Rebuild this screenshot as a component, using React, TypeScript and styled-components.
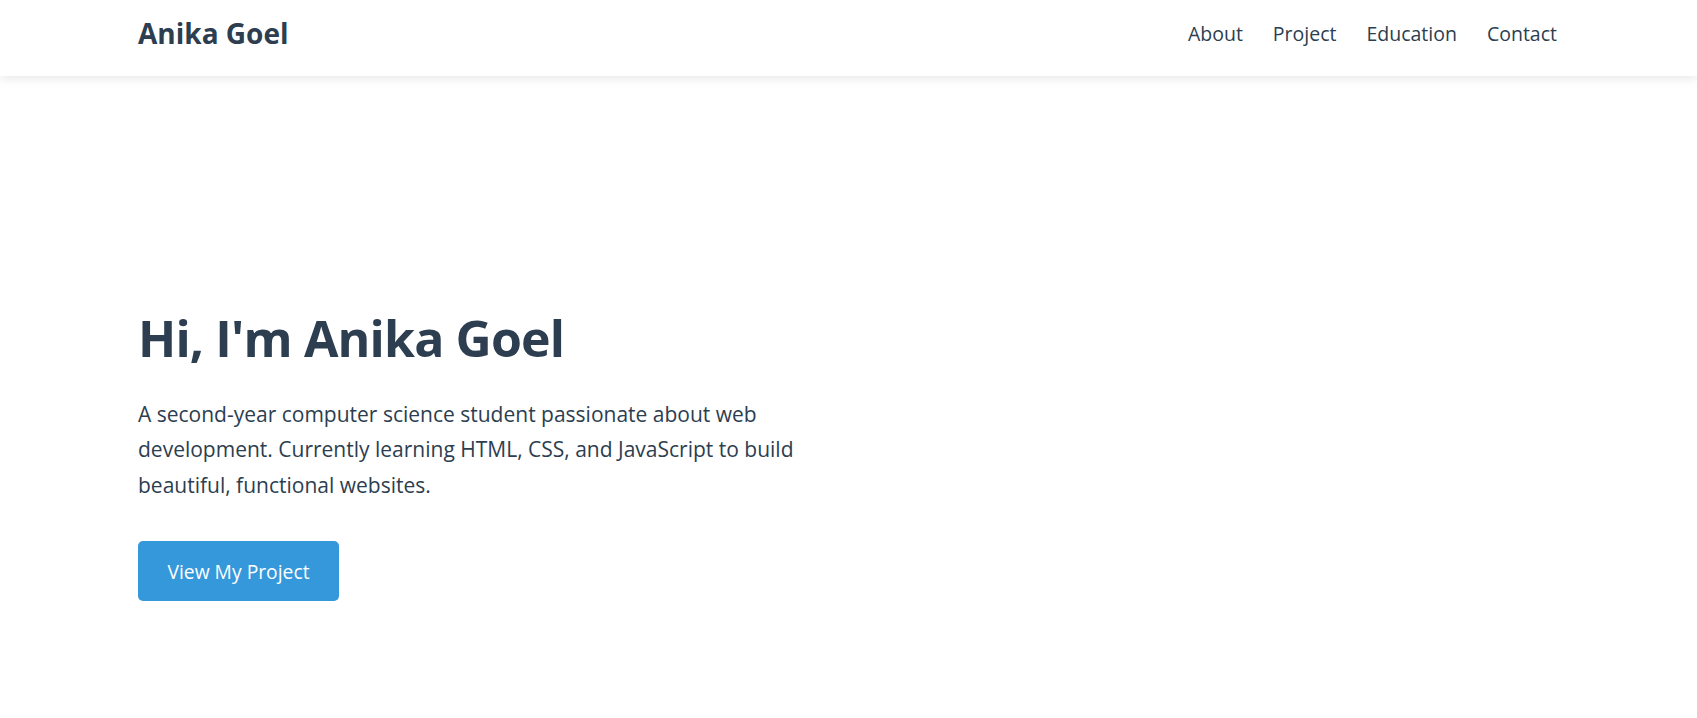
import styled, { createGlobalStyle } from "styled-components";

const GlobalStyle = createGlobalStyle`
  * {
    box-sizing: border-box;
    margin: 0;
    padding: 0;
  }
  body {
    font-family: "Segoe UI", "Open Sans", "Noto Sans", sans-serif;
    color: #2c3e50;
    background: #ffffff;
  }
`;

const navLinks = ["About", "Project", "Education", "Contact"];

const App = () => {
  return (
    <>
      <GlobalStyle />
      <Header>
        <Logo>Anika Goel</Logo>
        <Nav>
          {navLinks.map((link) => (
            <NavLink key={link} href={`#${link.toLowerCase()}`}>
              {link}
            </NavLink>
          ))}
        </Nav>
      </Header>
      <Hero>
        <Title>Hi, I'm Anika Goel</Title>
        <Intro>
          A second-year computer science student passionate about web
          development. Currently learning HTML, CSS, and JavaScript to build
          beautiful, functional websites.
        </Intro>
        <Button href="#project">View My Project</Button>
      </Hero>
    </>
  );
};

export default App;

const Header = styled.header`
  height: 76px;
  padding: 0 140px 10px 138px;
  display: flex;
  align-items: center;
  justify-content: space-between;
  background: #ffffff;
  box-shadow: 0 2px 10px rgba(0, 0, 0, 0.1);
  position: relative;
  z-index: 10;
`;

const Logo = styled.div`
  font-size: 28px;
  font-weight: 700;
  color: #2c3e50;
`;

const Nav = styled.nav`
  display: flex;
  align-items: center;
  gap: 30px;
`;

const NavLink = styled.a`
  font-size: 19.5px;
  font-weight: 500;
  color: #2c3e50;
  text-decoration: none;
`;

const Hero = styled.section`
  padding: 232px 138px 0;
  display: flex;
  flex-direction: column;
  align-items: flex-start;
`;

const Title = styled.h1`
  font-size: 50px;
  font-weight: 700;
  line-height: 1.2;
  letter-spacing: -0.85px;
  color: #2c3e50;
  margin-bottom: 29px;
`;

const Intro = styled.p`
  max-width: 700px;
  font-size: 21px;
  line-height: 35.4px;
  color: #2c3e50;
  margin-bottom: 38px;
`;

const Button = styled.a`
  display: inline-flex;
  align-items: center;
  justify-content: center;
  width: 201px;
  height: 60px;
  background: #3498db;
  color: #ffffff;
  font-size: 19.3px;
  border-radius: 5px;
  text-decoration: none;
`;
